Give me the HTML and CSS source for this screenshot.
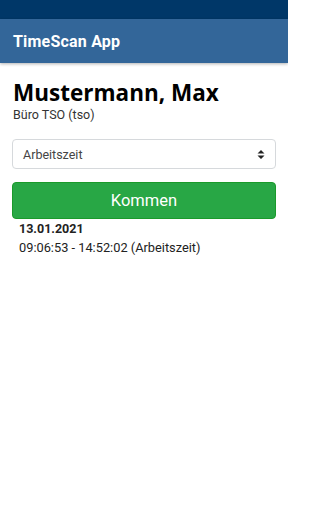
FILE: index.html
```html
<!DOCTYPE html>
<html>
<head>
<meta charset="utf-8">
<link rel="stylesheet" href="styles.css">
</head>
<body>
<div class="status"></div>
<header class="appbar"><span class="title">TimeScan App</span></header>
<main class="content">
  <h1 class="name">Mustermann, Max</h1>
  <div class="office">Büro TSO (tso)</div>
  <div class="select">
    <span>Arbeitszeit</span>
    <svg class="arrows" width="8" height="11" viewBox="0 0 8 11"><path d="M4 1 L7.5 4.5 H0.5 Z M4 10 L7.5 6.5 H0.5 Z" fill="#222"/></svg>
  </div>
  <button class="btn">Kommen</button>
  <div class="entries">
    <div class="date">13.01.2021</div>
    <div class="entry">09:06:53 - 14:52:02 (Arbeitszeit)</div>
  </div>
</main>
</body>
</html>
```
FILE: styles.css
```css
html, body { margin: 0; padding: 0; background: #fff; }
body { font-family: Roboto, "Liberation Sans", sans-serif; width: 288px; height: 512px; overflow: hidden; }
.status { height: 19px; background: #003768; }
.appbar { height: 44px; background: #336699; display: flex; align-items: center; padding-left: 13px; box-shadow: 0 1px 3px rgba(0,0,0,0.3); position: relative; }
.title { color: #fff; font-weight: bold; font-size: 16px; letter-spacing: 0.2px; }
.content { padding: 0 12px; }
.name { margin: 16px 0 0 1px; font-family: "Open Sans", sans-serif; font-weight: bold; font-size: 22.5px; line-height: 27px; color: #000; }
.office { margin: 1px 0 0 1px; font-size: 12.5px; color: #333; line-height: 16px; }
.select { margin-top: 16px; height: 28px; border: 1px solid #d6d9dc; border-radius: 4px; display: flex; align-items: center; justify-content: space-between; padding: 0 10px 0 10px; font-size: 12.5px; color: #444; }
.btn { display: block; width: 100%; margin-top: 13px; height: 37px; background: #28a745; border: 1px solid #1a9a2a; border-radius: 4px; color: #fff; font-family: Roboto, sans-serif; font-size: 16.5px; padding: 0; }
.entries { padding-left: 7px; margin-top: 2px; font-size: 12.8px; color: #222; }
.date { font-weight: bold; line-height: 16px; font-size: 12.5px; }
.entry { line-height: 16px; margin-top: 3px; }
```
